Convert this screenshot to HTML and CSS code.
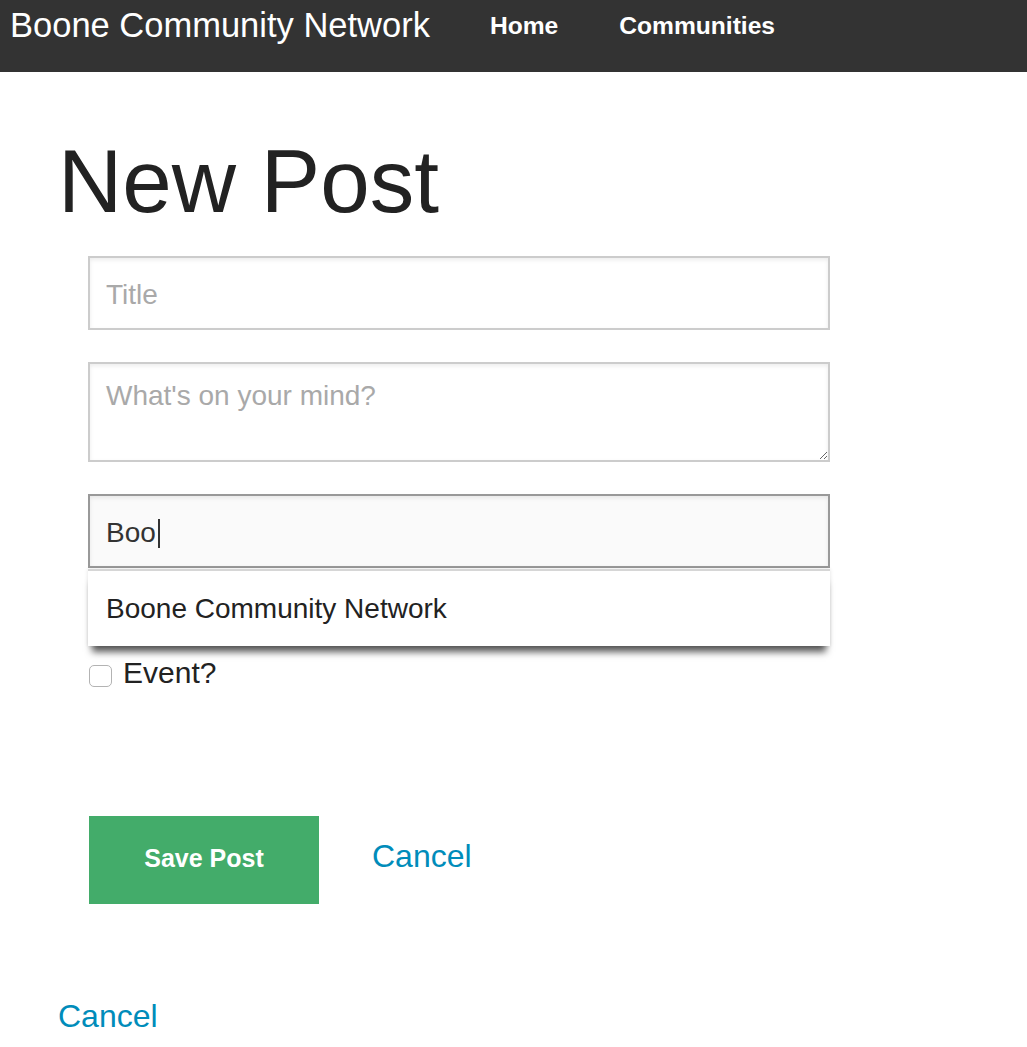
FILE: index.html
```html
<!DOCTYPE html>
<html lang="en">
<head>
<meta charset="utf-8">
<title>New Post</title>
<link rel="stylesheet" href="styles.css">
</head>
<body>
<header class="topbar">
  <a class="brand" href="#">Boone Community Network</a>
  <nav class="nav">
    <a class="nav-item" href="#">Home</a>
    <a class="nav-item" href="#">Communities</a>
  </nav>
</header>
<main class="page">
  <h1 class="page-title">New Post</h1>
  <form class="post-form">
    <input class="field" type="text" placeholder="Title">
    <textarea class="field field-area" placeholder="What's on your mind?"></textarea>
    <div class="combo">
      <div class="field field-focus"><span class="typed">Boo</span><span class="caret"></span></div>
      <ul class="suggestions">
        <li class="suggestion">Boone Community Network</li>
      </ul>
    </div>
    <label class="check-row"><input class="check" type="checkbox"><span>Event?</span></label>
    <div class="actions">
      <button class="btn-save" type="button">Save Post</button>
      <a class="link" href="#">Cancel</a>
    </div>
  </form>
  <a class="link link-bottom" href="#">Cancel</a>
</main>
</body>
</html>
```

FILE: styles.css
```css
* { box-sizing: border-box; }

body {
  margin: 0;
  font-family: "Liberation Sans", Arial, sans-serif;
  color: #222;
  background: #fff;
}

.topbar {
  height: 72px;
  background: #333;
  display: flex;
  align-items: flex-start;
}

.brand {
  padding-left: 10px;
  font-size: 34.5px;
  line-height: 50px;
  color: #fff;
  text-decoration: none;
}

.nav {
  display: flex;
  margin-left: 30px;
}

.nav-item {
  padding: 0 31px 0 30px;
  font-size: 24.6px;
  font-weight: bold;
  line-height: 52px;
  color: #fff;
  text-decoration: none;
}

.page {
  padding-left: 58px;
}

.page-title {
  margin: 61px 0 0;
  font-size: 89px;
  font-weight: normal;
  line-height: 97px;
  color: #222;
}

.post-form {
  margin-top: 26px;
  padding-left: 30px;
  width: 772px;
}

.field {
  display: block;
  width: 742px;
  height: 74px;
  margin: 0 0 32px;
  padding: 3px 16px 0;
  border: 2px solid #ccc;
  border-radius: 0;
  background: #fff;
  box-shadow: inset 0 2px 4px rgba(0, 0, 0, 0.08);
  font-family: "Liberation Sans", Arial, sans-serif;
  font-size: 28px;
  color: #333;
  outline: none;
}

.field::placeholder {
  color: #a9a9a9;
}

.field-area {
  height: 100px;
  padding: 16px;
  line-height: normal;
  resize: vertical;
}

.combo {
  position: relative;
  margin-bottom: 89px;
}

.field-focus {
  margin: 0;
  padding-top: 4px;
  display: flex;
  align-items: center;
  background: #fafafa;
  border-color: #999;
}

.caret {
  display: inline-block;
  width: 2px;
  height: 29px;
  margin-left: 2px;
  background: #333;
}

.suggestions {
  position: absolute;
  left: 0;
  top: 75px;
  width: 742px;
  margin: 0;
  padding: 0;
  list-style: none;
  background: #fff;
  border-top: 2px solid #d6d6d6;
  box-shadow: 0 10px 7px -4px rgba(0, 0, 0, 0.65), 0 0 4px rgba(0, 0, 0, 0.12);
  z-index: 2;
}

.suggestion {
  height: 75px;
  padding: 0 18px;
  font-size: 28px;
  line-height: 76px;
  color: #222;
}

.check-row {
  display: flex;
  align-items: flex-start;
  font-size: 30px;
  line-height: 32px;
  color: #222;
}

.check {
  appearance: none;
  -webkit-appearance: none;
  width: 23px;
  height: 22px;
  margin: 8px 11px 0 1px;
  border: 1.5px solid #b3b3b3;
  border-radius: 5px;
  background: #fff;
}

.actions {
  display: flex;
  align-items: flex-start;
  margin-top: 127px;
}

.btn-save {
  width: 230px;
  height: 88px;
  margin-left: 1px;
  padding: 0 0 3px;
  border: none;
  background: #43ac6a;
  color: #fff;
  font-family: "Liberation Sans", Arial, sans-serif;
  font-size: 25px;
  font-weight: bold;
}

.link {
  font-size: 32px;
  line-height: 37px;
  color: #008cba;
  text-decoration: none;
}

.actions .link {
  margin: 22px 0 0 53px;
}

.link-bottom {
  display: inline-block;
  margin-top: 94px;
}
```
